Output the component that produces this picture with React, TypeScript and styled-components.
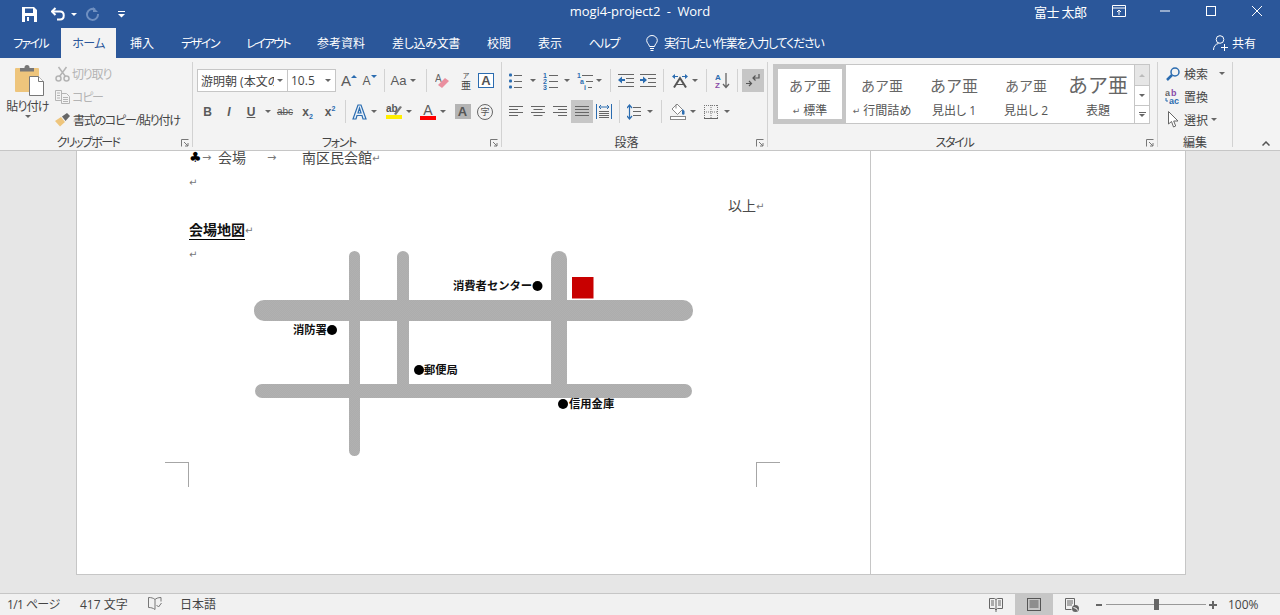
import React from "react";
import styled, { createGlobalStyle } from "styled-components";

const UI_FONT = `"Open Sans", "Noto Sans CJK JP", sans-serif`;
const DOC_FONT = `"Liberation Serif", "Noto Sans CJK JP", serif`;

const GlobalStyle = createGlobalStyle`
  html, body { margin: 0; padding: 0; height: 100%; overflow: hidden; }
  body { font-family: ${UI_FONT}; font-size: 12px; color: #444; font-feature-settings: "palt"; }
  svg { display: block; flex: none; }
`;

const Window = styled.div`
  width: 1280px;
  height: 615px;
  display: flex;
  flex-direction: column;
  overflow: hidden;
  background: #e6e6e6;
`;

const TitleBar = styled.div`
  height: 28px;
  background: #2b579a;
  color: #fff;
  display: flex;
  align-items: center;
  position: relative;
`;

const QuickAccess = styled.div`
  display: flex;
  align-items: center;
  padding-left: 22px;
`;

const QuickBtn = styled.div<{ $w: number }>`
  width: ${(p) => p.$w}px;
  display: flex;
  align-items: center;
  gap: 5px;
`;

const DocTitle = styled.div`
  position: absolute;
  left: 0;
  right: 0;
  top: 3px;
  text-align: center;
  font-size: 13px;
  letter-spacing: -0.1px;
  line-height: 16px;
  white-space: pre;
`;

const WindowControls = styled.div`
  margin-left: auto;
  display: flex;
  align-items: center;
  height: 22px;
  margin-top: -6px;
`;

const UserName = styled.span`
  font-size: 13px;
  letter-spacing: -0.6px;
  width: 78px;
`;

const WinBtn = styled.div<{ $w: number }>`
  width: ${(p) => p.$w}px;
  display: flex;
  justify-content: center;
`;

const TabBar = styled.div`
  height: 30px;
  background: #2b579a;
  display: flex;
  align-items: stretch;
  color: #fff;
`;

const Tab = styled.div<{ $w: number; $ls: number; $active?: boolean }>`
  width: ${(p) => p.$w}px;
  display: flex;
  align-items: center;
  justify-content: center;
  font-size: 12px;
  letter-spacing: ${(p) => p.$ls}px;
  background: ${(p) => (p.$active ? "#f3f3f3" : "transparent")};
  color: ${(p) => (p.$active ? "#2b579a" : "#fff")};
`;

const TellMe = styled.div`
  display: flex;
  align-items: center;
  gap: 6px;
  margin-left: 14px;
  font-size: 12px;
  letter-spacing: -1.2px;
`;

const ShareBtn = styled.div`
  margin-left: auto;
  margin-right: 24px;
  display: flex;
  align-items: center;
  gap: 4px;
  font-size: 12px;
`;

const Ribbon = styled.div`
  height: 93px;
  box-sizing: border-box;
  background: #f3f3f3;
  border-bottom: 1px solid #c6c6c6;
  padding-top: 4px;
  display: flex;
  align-items: flex-start;
  position: relative;
`;

const Group = styled.div<{ $w: number }>`
  width: ${(p) => p.$w}px;
  height: 85px;
  box-sizing: border-box;
  border-right: 1px solid #d2d2d2;
  display: flex;
  flex-direction: column;
  position: relative;
`;

const GroupBody = styled.div`
  flex: 1;
  min-height: 0;
`;

const GroupLabel = styled.div<{ $launcher?: boolean; $ls?: number }>`
  height: 12px;
  line-height: 16px;
  text-align: center;
  font-size: 12px;
  letter-spacing: ${(p) => p.$ls ?? 0}px;
  color: #444;
  padding-right: ${(p) => (p.$launcher ? 16 : 0)}px;
`;

const LauncherSlot = styled.div`
  position: absolute;
  right: 3px;
  bottom: 0;
`;

const ClipboardBody = styled(GroupBody)`
  display: flex;
`;

const PasteBtn = styled.div`
  width: 55px;
  display: flex;
  flex-direction: column;
  align-items: center;
  padding-top: 3px;
  font-size: 12px;
  color: #444;
`;

const PasteArt = styled.div`
  margin-left: 3px;
`;

const PasteLabel = styled.div`
  margin-top: 3px;
  letter-spacing: -0.8px;
  line-height: 16px;
`;

const ClipList = styled.div`
  display: flex;
  flex-direction: column;
`;

const ClipRow = styled.div<{ $off?: boolean }>`
  height: 23px;
  display: flex;
  align-items: center;
  gap: 2px;
  letter-spacing: -1.2px;
  color: ${(p) => (p.$off ? "#b4b4b4" : "#444")};
  white-space: nowrap;
`;

const ToolStack = styled.div`
  display: flex;
  flex-direction: column;
  gap: 8px;
  padding-top: 7px;
`;

const ToolRow = styled.div<{ $pl: number }>`
  height: 23px;
  display: flex;
  align-items: center;
  padding-left: ${(p) => p.$pl}px;
`;

const Tool = styled.div<{ $w: number; $active?: boolean; $ml?: number; $gap?: number }>`
  width: ${(p) => p.$w}px;
  height: 23px;
  margin-left: ${(p) => p.$ml ?? 0}px;
  flex: none;
  display: flex;
  align-items: center;
  justify-content: center;
  gap: ${(p) => p.$gap ?? 4}px;
  background: ${(p) => (p.$active ? "#c6c6c6" : "transparent")};
`;

const Divider = styled.div<{ $l?: number; $r?: number }>`
  width: 1px;
  height: 23px;
  flex: none;
  background: #d2d2d2;
  margin-left: ${(p) => p.$l ?? 0}px;
  margin-right: ${(p) => p.$r ?? 0}px;
`;

const Caret = styled.span<{ $c?: string }>`
  width: 0;
  height: 0;
  flex: none;
  border-left: 3px solid transparent;
  border-right: 3px solid transparent;
  border-top: 3px solid ${(p) => p.$c ?? "#666"};
`;

const SizeUpCaret = styled.span`
  width: 0;
  height: 0;
  align-self: flex-start;
  margin-top: 6px;
  border-left: 3px solid transparent;
  border-right: 3px solid transparent;
  border-bottom: 3px solid #2b6cb0;
`;

const SizeDownCaret = styled(SizeUpCaret)`
  border-bottom: none;
  border-top: 3px solid #2b6cb0;
`;

const ComboBox = styled.div<{ $w: number }>`
  width: ${(p) => p.$w}px;
  height: 23px;
  box-sizing: border-box;
  flex: none;
  background: #fff;
  border: 1px solid #c6c6c6;
  margin-right: -1px;
  display: flex;
  align-items: center;
  justify-content: space-between;
  padding: 0 4px 0 3px;
  font-size: 12px;
  color: #444;
  white-space: nowrap;
  overflow: hidden;
`;

const ComboText = styled.span<{ $w: number }>`
  width: ${(p) => p.$w}px;
  overflow: hidden;
`;

const Glyph = styled.span<{ $size?: number; $weight?: number; $italic?: boolean; $c?: string; $underline?: boolean }>`
  font-family: "Liberation Sans", sans-serif;
  font-size: ${(p) => p.$size ?? 12}px;
  font-weight: ${(p) => p.$weight ?? 700};
  font-style: ${(p) => (p.$italic ? "italic" : "normal")};
  color: ${(p) => p.$c ?? "#5a5a5a"};
  text-decoration: ${(p) => (p.$underline ? "underline" : "none")};
  line-height: 1;
  white-space: nowrap;
`;

const Sub = styled.sub`
  font-size: 7px;
  color: #2b6cb0;
  line-height: 0;
`;

const Sup = styled.sup`
  font-size: 7px;
  color: #2b6cb0;
  line-height: 0;
`;

const ColorA = styled.div<{ $bar: string }>`
  width: 16px;
  display: flex;
  flex-direction: column;
  align-items: center;
  font-family: "Liberation Sans", sans-serif;
  font-size: 14px;
  line-height: 12px;
  color: #5a5a5a;
  &::after {
    content: "";
    width: 100%;
    height: 4px;
    background: ${(p) => p.$bar};
  }
`;

const GrayA = styled.div`
  width: 16px;
  height: 15px;
  background: #b4b4b4;
  display: flex;
  align-items: center;
  justify-content: center;
  font-family: "Liberation Sans", sans-serif;
  font-weight: 700;
  font-size: 13px;
  color: #555;
`;

const BoxA = styled(GrayA)`
  box-sizing: border-box;
  background: #fff;
  border: 1px solid #2b6cb0;
`;

const CircleChar = styled.div`
  width: 16px;
  height: 16px;
  box-sizing: border-box;
  border: 1px solid #666;
  border-radius: 50%;
  display: flex;
  align-items: center;
  justify-content: center;
  font-size: 9px;
  color: #555;
`;

const Ruby = styled.div`
  display: flex;
  flex-direction: column;
  align-items: center;
  font-size: 10px;
  line-height: 10px;
  color: #444;
`;

const RubyTop = styled.span`
  font-size: 7px;
  line-height: 8px;
`;

const GalleryWrap = styled.div`
  display: flex;
  margin: 2px 0 0 5px;
`;

const Gallery = styled.div`
  width: 362px;
  height: 60px;
  box-sizing: border-box;
  background: #fff;
  border: 1px solid #c6c6c6;
  display: flex;
`;

const StyleCell = styled.div<{ $w: number; $selected?: boolean }>`
  width: ${(p) => p.$w}px;
  flex: none;
  box-sizing: border-box;
  border: ${(p) => (p.$selected ? "4px solid #c6c6c6" : "none")};
  padding-top: ${(p) => (p.$selected ? 0 : 4)}px;
  display: flex;
  flex-direction: column;
  align-items: center;
`;

const StyleSample = styled.div<{ $size: number }>`
  height: 31px;
  display: flex;
  align-items: center;
  font-family: ${DOC_FONT};
  font-feature-settings: normal;
  font-size: ${(p) => p.$size}px;
  color: #666;
`;

const StyleName = styled.div`
  margin-top: 4px;
  font-size: 12px;
  line-height: 14px;
  color: #555;
  white-space: nowrap;
  display: flex;
  align-items: center;
  gap: 3px;
`;

const SmallMark = styled.span`
  font-family: "DejaVu Sans", sans-serif;
  font-size: 9px;
  color: #666;
`;

const GalleryScroll = styled.div`
  width: 15px;
  display: flex;
  flex-direction: column;
  border: 1px solid #c6c6c6;
  border-left: none;
  height: 60px;
  box-sizing: border-box;
`;

const ScrollBtn = styled.div<{ $off?: boolean; $h: number }>`
  height: ${(p) => p.$h}px;
  display: flex;
  flex-direction: column;
  gap: 1px;
  align-items: center;
  justify-content: center;
  background: ${(p) => (p.$off ? "#e6e6e6" : "#fff")};
  border-bottom: 1px solid #c6c6c6;
  &:last-child { border-bottom: none; }
`;

const UpCaret = styled(Caret)`
  border-top: none;
  border-bottom: 3px solid #bbb;
`;

const CaretBar = styled.span`
  width: 7px;
  height: 1px;
  background: #666;
`;

const EditList = styled.div`
  display: flex;
  flex-direction: column;
  padding-left: 7px;
`;

const EditRow = styled.div`
  height: 23px;
  display: flex;
  align-items: center;
  gap: 3px;
  color: #444;
`;

const EditIcon = styled.div`
  width: 16px;
  display: flex;
  justify-content: center;
`;

const EditCaret = styled(Caret)<{ $ml: number }>`
  margin-left: ${(p) => p.$ml}px;
`;

const Collapse = styled.div`
  position: absolute;
  right: 10px;
  bottom: 4px;
`;

const DocArea = styled.div`
  flex: 1;
  min-height: 0;
  background: #e6e6e6;
  padding-left: 76px;
`;

const Page = styled.div`
  width: 1110px;
  height: 424px;
  box-sizing: border-box;
  background: #fff;
  border: 1px solid #c6c6c6;
  border-top: none;
  display: flex;
  overflow: hidden;
`;

const TextColumn = styled.div`
  width: 794px;
  box-sizing: border-box;
  border-right: 1px solid #c6c6c6;
  padding: 0 106px 0 112px;
  position: relative;
`;

const Line = styled.div<{ $first?: boolean; $right?: boolean }>`
  height: 24px;
  margin-top: ${(p) => (p.$first ? -6 : 0)}px;
  display: flex;
  align-items: center;
  justify-content: ${(p) => (p.$right ? "flex-end" : "flex-start")};
  font-family: ${DOC_FONT};
  font-feature-settings: normal;
  font-size: 14px;
  color: #4a4a4a;
  white-space: nowrap;
`;

const Club = styled.span`
  font-family: "DejaVu Sans", sans-serif;
  font-size: 14px;
  line-height: 16px;
  color: #000;
  width: 13px;
`;

const TabArrow = styled.span<{ $w: number; $pl?: number }>`
  width: ${(p) => p.$w}px;
  box-sizing: border-box;
  padding-left: ${(p) => p.$pl ?? 0}px;
  font-family: "DejaVu Sans", sans-serif;
  font-size: 11px;
  color: #777;
`;

const Mark = styled.span`
  font-family: "DejaVu Sans", sans-serif;
  font-size: 10px;
  color: #777;
  width: 8px;
  padding-top: 3px;
`;

const Heading = styled.span`
  margin-top: 4px;
  font-weight: 700;
  color: #111;
  border-bottom: 1.5px solid #000;
  line-height: 17px;
`;

const MapFigure = styled.div`
  position: absolute;
  left: 176px;
  top: 99px;
`;

const CropRow = styled.div`
  margin: 197px -16px 0 -24px;
  display: flex;
  justify-content: space-between;
`;

const CropMark = styled.div<{ $side: "left" | "right" }>`
  width: 23px;
  height: 24px;
  border-top: 1px solid #a6a6a6;
  border-${(p) => p.$side}: 1px solid #a6a6a6;
`;

const StatusBar = styled.div`
  height: 22px;
  box-sizing: border-box;
  background: #f1f1f1;
  border-top: 1px solid #c6c6c6;
  display: flex;
  align-items: stretch;
  font-size: 12px;
  color: #444;
`;

const StatusItem = styled.div<{ $w: number; $pl?: number; $ls?: number }>`
  width: ${(p) => p.$w}px;
  box-sizing: content-box;
  padding-left: ${(p) => p.$pl ?? 0}px;
  padding-bottom: 2px;
  letter-spacing: ${(p) => p.$ls ?? 0}px;
  display: flex;
  align-items: center;
`;

const ViewBtn = styled.div<{ $w: number; $active?: boolean }>`
  width: ${(p) => p.$w}px;
  display: flex;
  align-items: center;
  justify-content: center;
  background: ${(p) => (p.$active ? "#c6c6c6" : "transparent")};
`;

const StatusRight = styled.div`
  margin-left: auto;
  display: flex;
  align-items: stretch;
`;

const Zoom = styled.div`
  display: flex;
  align-items: center;
  margin-left: 5px;
  width: 184px;
`;

const ZoomTrack = styled.div`
  width: 100px;
  height: 1px;
  background: #999;
  margin: 0 3px 0 4px;
  position: relative;
`;

const ZoomThumb = styled.div`
  position: absolute;
  left: 48px;
  top: -5px;
  width: 5px;
  height: 11px;
  background: #666;
`;

const ZoomSign = styled.span<{ $w: number }>`
  width: ${(p) => p.$w}px;
  height: 2px;
  background: #666;
  position: relative;
  flex: none;
`;

const ZoomPlus = styled(ZoomSign)`
  &::after {
    content: "";
    position: absolute;
    left: 3px;
    top: -3px;
    width: 2px;
    height: 8px;
    background: #666;
  }
`;

const ZoomValue = styled.span`
  margin-left: 11px;
  font-size: 12px;
`;

const Lines = ({ rows, x1, x2, c = "#666" }: { rows: number[]; x1: number[]; x2: number[]; c?: string }) => (
  <>
    {rows.map((y, i) => (
      <line key={i} x1={x1[i]} x2={x2[i]} y1={y + 0.5} y2={y + 0.5} stroke={c} />
    ))}
  </>
);

const SaveIcon = () => (
  <svg width="15" height="15" viewBox="0 0 15 15">
    <path d="M0 0h12l3 3v12H0z" fill="#fff" />
    <rect x="3" y="1.5" width="8" height="4.5" fill="#2b579a" />
    <rect x="3" y="9" width="9" height="6" fill="#2b579a" />
    <rect x="5" y="10" width="2" height="4" fill="#fff" />
  </svg>
);

const UndoIcon = ({ c }: { c: string }) => (
  <svg width="15" height="14" viewBox="0 0 15 14">
    <path d="M4.5 1L1 4.5 4.5 8" fill="none" stroke={c} strokeWidth="2" />
    <path d="M2 4.5h7c5 0 5 8 0 8H6" fill="none" stroke={c} strokeWidth="2" />
  </svg>
);

const RedoIcon = () => (
  <svg width="14" height="14" viewBox="0 0 14 14">
    <path d="M9 2.5A5.5 5.5 0 1 0 12 7" fill="none" stroke="#6f8fc0" strokeWidth="2" />
    <path d="M7 0v5h5z" fill="#6f8fc0" />
  </svg>
);

const CustomizeIcon = () => (
  <svg width="7" height="7" viewBox="0 0 7 7">
    <rect y="0" width="7" height="1" fill="#fff" />
    <path d="M0 3h7L3.5 6.5z" fill="#fff" />
  </svg>
);

const DisplayIcon = () => (
  <svg width="14" height="12" viewBox="0 0 14 12" fill="none" stroke="#fff">
    <path d="M.5.5h13v11H.5zM.5 3h13M7 10V5M5 7l2-2 2 2" />
  </svg>
);

const MinIcon = () => (
  <svg width="10" height="2" viewBox="0 0 10 2"><rect width="10" height="1" y="0.5" fill="#fff" /></svg>
);
const MaxIcon = () => (
  <svg width="10" height="10" viewBox="0 0 10 10"><rect x=".5" y=".5" width="9" height="9" fill="none" stroke="#fff" /></svg>
);
const CloseIcon = () => (
  <svg width="10" height="10" viewBox="0 0 10 10"><path d="M0 0l10 10M10 0L0 10" stroke="#fff" /></svg>
);

const BulbIcon = () => (
  <svg width="12" height="17" viewBox="0 0 12 17" fill="none" stroke="#fff">
    <path d="M3.5 11.5C3 9 .7 8 .7 5.5a5.3 5 0 0 1 10.6 0c0 2.5-2.3 3.5-2.800 6z" />
    <path d="M4 13.500h4M4.500 15.500h3" />
  </svg>
);

const ShareIcon = () => (
  <svg width="15" height="16" viewBox="0 0 15 16" fill="none" stroke="#fff">
    <circle cx="7" cy="4.500" r="3.800" />
    <path d="M.5 15c0-3.500 2-6 5-6.500M8 12.500h7M11.500 9v7" />
  </svg>
);

const PasteIcon = () => (
  <svg width="29" height="31" viewBox="0 0 29 31">
    <rect x="0" y="3" width="24" height="24" rx="1" fill="#eec57c" />
    <circle cx="12" cy="2.500" r="2.500" fill="#777" />
    <rect x="5" y="3" width="14" height="3.500" fill="#777" />
    <path d="M14.500 11.500h9l5 5v14h-14z" fill="#fff" stroke="#777" />
    <path d="M23.500 11.500v5h5" fill="#fff" stroke="#777" />
  </svg>
);

const ScissorsIcon = () => (
  <svg width="15" height="16" viewBox="0 0 15 16" fill="none" stroke="#b4b4b4" strokeWidth="1.500">
    <circle cx="3.500" cy="12.500" r="2.500" />
    <circle cx="11.500" cy="12.500" r="2.500" />
    <path d="M4.500 10.500L11.500 1M10.500 10.500L3.500 1" />
  </svg>
);

const CopyIcon = () => (
  <svg width="15" height="14" viewBox="0 0 15 14" fill="none" stroke="#b4b4b4">
    <path d="M.5.5h6v10h-6zM6.500 3.500h5l3 3v7h-8z" fill="#f3f3f3" />
    <path d="M2 3h3M2 5.500h3M2 8h3M8 7.500h5M8 9.500h5M8 11.500h5" />
  </svg>
);

const BrushIcon = () => (
  <svg width="16" height="15" viewBox="0 0 16 15">
    <path d="M0 9l6-4 4 5-5 4.500z" fill="#eec57c" />
    <path d="M7 4.500l5-3.500 3 3-4.500 5z" fill="#666" />
  </svg>
);

const Launcher = () => (
  <svg width="8" height="8" viewBox="0 0 8 8" fill="none" stroke="#777">
    <path d="M.5 7.500v-7h7" />
    <path d="M3 3l4 4M7 4v3H4" />
  </svg>
);

const ListDigit = styled.text`
  font-family: "Liberation Sans", sans-serif;
  font-size: 7px;
  font-weight: 700;
  fill: #2b6cb0;
`;

const BulletListIcon = () => (
  <svg width="14" height="16" viewBox="0 0 14 16">
    {[2, 8, 14].map((y) => (
      <rect key={y} x="0" y={y - 1.5} width="3" height="3" rx="1" fill="#2b6cb0" />
    ))}
    <Lines rows={[2, 8, 14]} x1={[5, 5, 5]} x2={[13, 13, 13]} />
  </svg>
);

const NumberListIcon = () => (
  <svg width="15" height="18" viewBox="0 0 15 18">
    {["1", "2", "3"].map((n, i) => (
      <ListDigit key={n} x="0" y={5.5 + i * 6}>{n}</ListDigit>
    ))}
    <Lines rows={[3, 9, 15]} x1={[6, 6, 6]} x2={[15, 15, 15]} />
  </svg>
);

const MultiListIcon = () => (
  <svg width="16" height="18" viewBox="0 0 16 18">
    <ListDigit x="0" y="5.500">1</ListDigit>
    <ListDigit x="3" y="11.500">a</ListDigit>
    <ListDigit x="7" y="17.500">i</ListDigit>
    <Lines rows={[3, 9, 15]} x1={[5, 9, 11]} x2={[16, 16, 15]} />
  </svg>
);

const IndentIcon = ({ flip }: { flip?: boolean }) => (
  <svg width="16" height="13" viewBox="0 0 16 13">
    <Lines rows={[0, 4, 8, 12]} x1={[0, 8, 8, 0]} x2={[16, 16, 16, 16]} />
    {flip ? (
      <path d="M0 5h3V2.500l4 3.500-4 3.500V7H0z" fill="#2b6cb0" />
    ) : (
      <path d="M7 5H4V2.500L0 6l4 3.500V7h3z" fill="#2b6cb0" />
    )}
  </svg>
);

const DirectionIcon = () => (
  <svg width="16" height="14" viewBox="0 0 16 14">
    <path d="M2 13.500L8 4l6 9.500" fill="none" stroke="#555" strokeWidth="2" />
    <path d="M3 10.500h10" stroke="#555" />
    <path d="M0 2.500L3 0v5zM16 2.500L13 0v5z" fill="#2b6cb0" />
    <path d="M2 2.500h4M10 2.500h4" stroke="#2b6cb0" />
  </svg>
);

const SortIcon = () => (
  <svg width="15" height="16" viewBox="0 0 15 16">
    <text x="0" y="7" fontFamily="Liberation Sans" fontWeight="700" fontSize="8" fill="#2b6cb0">A</text>
    <text x="0" y="15" fontFamily="Liberation Sans" fontWeight="700" fontSize="8" fill="#8a4ca8">Z</text>
    <path d="M11 0v14M8 11l3 3.500 3-3.500" fill="none" stroke="#666" strokeWidth="1.300" />
  </svg>
);

const PilcrowIcon = () => (
  <svg width="14" height="13" viewBox="0 0 14 13" fill="none" stroke="#555" strokeWidth="1.200">
    <path d="M13 0v4H7M9.500 1.500L7 4l2.500 2.500" />
    <path d="M0 9.500h5M3 7l2.500 2.500L3 12" />
  </svg>
);

const AlignIcon = ({ kind }: { kind: "left" | "center" | "right" | "justify" }) => {
  const w = [14, 9, 14, 9];
  const full = kind === "justify";
  const starts = w.map((n) => (full ? 0 : kind === "left" ? 0 : kind === "center" ? (14 - n) / 2 : 14 - n));
  const ends = w.map((n, i) => (full ? 14 : starts[i] + n));
  return (
    <svg width="14" height="12" viewBox="0 0 14 12">
      <Lines rows={[0, 3, 6, 9]} x1={starts} x2={ends} />
    </svg>
  );
};

const DistributeIcon = () => (
  <svg width="16" height="15" viewBox="0 0 16 15">
    <path d="M.5 0v15M15.500 0v15" stroke="#2b6cb0" />
    <path d="M3 3h10M5 1L3 3l2 2M11 1l2 2-2 2" fill="none" stroke="#2b6cb0" />
    <Lines rows={[7, 9, 11, 13]} x1={[3, 3, 3, 3]} x2={[13, 13, 13, 13]} />
  </svg>
);

const SpacingIcon = () => (
  <svg width="14" height="16" viewBox="0 0 14 16">
    <path d="M2.500 2v12M0 4l2.500-3L5 4M0 12l2.500 3L5 12" fill="none" stroke="#2b6cb0" strokeWidth="1.200" />
    <Lines rows={[3, 7, 11]} x1={[6, 6, 6]} x2={[14, 14, 14]} />
  </svg>
);

const ShadingIcon = () => (
  <svg width="16" height="17" viewBox="0 0 16 17">
    <path d="M7 1l5.500 5.500-5 5-5.500-5.500z" fill="#fff" stroke="#888" />
    <path d="M6 1.500v4" stroke="#888" />
    <path d="M12.500 6l2 2v2.500a1.200 1.200 0 0 1-2.500 0V8z" fill="#2b6cb0" />
    <rect x=".5" y="13.500" width="15" height="3" fill="#fff" stroke="#888" />
  </svg>
);

const BordersIcon = () => (
  <svg width="14" height="14" viewBox="0 0 14 14" fill="none">
    <g stroke="#777" strokeDasharray="1 1">
      <path d="M.5 0v13M13.500 0v13M7 0v13M0 .5h14M0 7h14" />
    </g>
    <path d="M0 13.500h14" stroke="#666" />
  </svg>
);

const TextEffectIcon = () => (
  <svg width="15" height="16" viewBox="0 0 15 16">
    <path d="M1 15L6 1h3l5 14h-3l-1-3.500H5L4 15zM6 9h3L7.500 4z" fill="#e8f0f8" stroke="#2b6cb0" strokeWidth="1.200" />
  </svg>
);

const HighlightIcon = () => (
  <svg width="16" height="17" viewBox="0 0 16 17">
    <text x="0" y="9" fontFamily="Liberation Sans" fontSize="10" fontWeight="700" fill="#555">ab</text>
    <path d="M8 11l6-8 2 1-6 8z" fill="#777" />
    <rect x="0" y="12" width="16" height="4" fill="#ffee00" />
  </svg>
);

const EraserIcon = () => (
  <svg width="15" height="16" viewBox="0 0 15 16">
    <text x="0" y="9" fontFamily="Liberation Sans" fontSize="10" fill="#666">A</text>
    <path d="M3 12l7-7 4 3-7 7z" fill="#ea8f9f" />
  </svg>
);

const SearchIcon = () => (
  <svg width="14" height="14" viewBox="0 0 14 14" fill="none">
    <circle cx="9" cy="5" r="4" stroke="#2b6cb0" strokeWidth="1.500" />
    <path d="M6 8l-5 5" stroke="#2b6cb0" strokeWidth="2.500" />
  </svg>
);

const ReplaceIcon = () => (
  <svg width="16" height="16" viewBox="0 0 16 16">
    <text x="0" y="7" fontFamily="Liberation Sans" fontWeight="700" fontSize="9" fill="#666">a</text>
    <text x="6" y="7" fontFamily="Liberation Sans" fontWeight="700" fontSize="9" fill="#8a4ca8">b</text>
    <text x="4" y="15" fontFamily="Liberation Sans" fontWeight="700" fontSize="9" fill="#2b6cb0">ac</text>
    <path d="M1 9v3h2" fill="none" stroke="#2b6cb0" />
  </svg>
);

const SelectIcon = () => (
  <svg width="11" height="17" viewBox="0 0 11 17">
    <path d="M.5.500v12.500l3-2.500 2 5.500 2.200-1-2-5h4.300z" fill="#fff" stroke="#666" />
  </svg>
);

const ChevronUp = () => (
  <svg width="8" height="5" viewBox="0 0 8 5"><path d="M.5 4.500L4 1l3.500 3.500" fill="none" stroke="#555" strokeWidth="1.500" /></svg>
);

const BookIcon = () => (
  <svg width="14" height="13" viewBox="0 0 14 13" fill="none" stroke="#777">
    <path d="M7 2.500C5.500 1 3 .5.500.5v10c2.500 0 4.500.5 6.500 2V2.500c1-1 3-2 6-2v4" />
    <path d="M8.500 8l2 2 3-4" />
  </svg>
);

const ReadIcon = () => (
  <svg width="14" height="15" viewBox="0 0 14 15" fill="none" stroke="#666">
    <path d="M.5 1.500h5L7 2.500l1.500-1h5v10h-5L7 13l-1.500-1.500h-5zM7 2.500V15" />
    <path d="M2 4h3M2 6h3M2 8h3M9 4h3M9 6h3M9 8h3" />
  </svg>
);

const PrintIcon = () => (
  <svg width="14" height="13" viewBox="0 0 14 13" fill="none" stroke="#555">
    <rect x=".5" y=".5" width="13" height="12" />
    <path d="M2.500 3h9M2.500 5h9M2.500 7h9M2.500 9h9" />
  </svg>
);

const WebIcon = () => (
  <svg width="14" height="14" viewBox="0 0 14 14">
    <path d="M9.500 8.500V.5h-9v11h6" fill="none" stroke="#666" />
    <path d="M2 3h6M2 5h6M2 7h5" stroke="#666" />
    <circle cx="10.500" cy="10.500" r="3.500" fill="#666" />
    <path d="M8.500 9.500l3 1 1 2" stroke="#fff" fill="none" />
  </svg>
);

const MapLabel = styled.text`
  font-family: "Noto Sans CJK JP", sans-serif;
  font-feature-settings: normal;
  font-size: 11.3px;
  font-weight: 700;
  fill: #111;
`;

const VenueMap = () => (
  <svg width="442" height="208" viewBox="0 0 442 208">
    <defs>
      <pattern id="roadDither" width="2" height="2" patternUnits="userSpaceOnUse">
        <rect width="2" height="2" fill="#b1b1b1" />
        <rect width="1" height="1" fill="#adadad" />
        <rect x="1" y="1" width="1" height="1" fill="#adadad" />
      </pattern>
    </defs>
    <g fill="url(#roadDither)">
      <rect x="1" y="50" width="439" height="21" rx="10" />
      <rect x="2" y="134" width="437" height="14" rx="7" />
      <rect x="96" y="1" width="11" height="205" rx="5.500" />
      <rect x="144" y="1" width="12" height="140" rx="6" />
      <rect x="298" y="1" width="16" height="140" rx="8" />
    </g>
    <rect x="319" y="27" width="21.500" height="21.500" fill="#c80000" />
    <MapLabel x="200" y="40">消費者センター</MapLabel>
    <circle cx="284.500" cy="36" r="5" fill="#000" />
    <MapLabel x="40" y="84">消防署</MapLabel>
    <circle cx="79" cy="80" r="5" fill="#000" />
    <circle cx="166" cy="120" r="5" fill="#000" />
    <MapLabel x="171" y="124">郵便局</MapLabel>
    <circle cx="310" cy="154" r="5" fill="#000" />
    <MapLabel x="316" y="158">信用金庫</MapLabel>
  </svg>
);

const TABS = [
  { label: "ファイル", w: 61, ls: -1.7 },
  { label: "ホーム", w: 55, ls: -0.6, active: true },
  { label: "挿入", w: 52, ls: 0 },
  { label: "デザイン", w: 64, ls: -1.5 },
  { label: "レイアウト", w: 72, ls: -1.8 },
  { label: "参考資料", w: 74, ls: 0 },
  { label: "差し込み文書", w: 96, ls: -0.3 },
  { label: "校閲", w: 50, ls: 0 },
  { label: "表示", w: 52, ls: 0 },
  { label: "ヘルプ", w: 56, ls: -1.3 },
];

const STYLES = [
  { label: "標準", size: 14, w: 72, selected: true, mark: true },
  { label: "行間詰め", size: 14, w: 72, mark: true },
  { label: "見出し 1", size: 16, w: 72 },
  { label: "見出し 2", size: 14, w: 72 },
  { label: "表題", size: 20, w: 72 },
];

const App = () => {
  return (
    <Window>
      <GlobalStyle />
      <TitleBar>
        <QuickAccess>
          <QuickBtn $w={29}><SaveIcon /></QuickBtn>
          <QuickBtn $w={35}>
            <UndoIcon c="#fff" />
            <Caret $c="#fff" />
          </QuickBtn>
          <QuickBtn $w={32}><RedoIcon /></QuickBtn>
          <QuickBtn $w={10}><CustomizeIcon /></QuickBtn>
        </QuickAccess>
        <DocTitle>{"mogi4-project2  -  Word"}</DocTitle>
        <WindowControls>
          <UserName>富士 太郎</UserName>
          <WinBtn $w={14}><DisplayIcon /></WinBtn>
          <WinBtn $w={34} />
          <WinBtn $w={10}><MinIcon /></WinBtn>
          <WinBtn $w={36} />
          <WinBtn $w={10}><MaxIcon /></WinBtn>
          <WinBtn $w={36} />
          <WinBtn $w={10}><CloseIcon /></WinBtn>
          <WinBtn $w={18} />
        </WindowControls>
      </TitleBar>

      <TabBar>
        {TABS.map((t) => (
          <Tab key={t.label} $w={t.w} $ls={t.ls} $active={t.active}>{t.label}</Tab>
        ))}
        <TellMe>
          <BulbIcon />
          実行したい作業を入力してください
        </TellMe>
        <ShareBtn>
          <ShareIcon />
          共有
        </ShareBtn>
      </TabBar>

      <Ribbon>
        <Group $w={193}>
          <ClipboardBody>
            <PasteBtn>
              <PasteArt><PasteIcon /></PasteArt>
              <PasteLabel>貼り付け</PasteLabel>
              <Caret />
            </PasteBtn>
            <ClipList>
              <ClipRow $off><ScissorsIcon />切り取り</ClipRow>
              <ClipRow $off><CopyIcon />コピー</ClipRow>
              <ClipRow><BrushIcon />書式のコピー/貼り付け</ClipRow>
            </ClipList>
          </ClipboardBody>
          <GroupLabel $launcher $ls={-1.6}>クリップボード</GroupLabel>
          <LauncherSlot><Launcher /></LauncherSlot>
        </Group>

        <Group $w={309}>
          <GroupBody>
            <ToolStack>
              <ToolRow $pl={4}>
                <ComboBox $w={91}><ComboText $w={73}>游明朝 (本文の</ComboText><Caret /></ComboBox>
                <ComboBox $w={49}><span>10.5</span><Caret /></ComboBox>
                <Tool $w={20} $ml={4} $gap={0}><Glyph $size={15} $weight={400}>A</Glyph><SizeUpCaret /></Tool>
                <Tool $w={21} $gap={0}><Glyph $size={12} $weight={400}>A</Glyph><SizeDownCaret /></Tool>
                <Divider $l={4} />
                <Tool $w={37}><Glyph $size={13} $weight={400}>Aa</Glyph><Caret /></Tool>
                <Divider $l={4} />
                <Tool $w={30}><EraserIcon /></Tool>
                <Tool $w={18}><Ruby><RubyTop>ア</RubyTop>亜</Ruby></Tool>
                <Tool $w={22}><BoxA>A</BoxA></Tool>
              </ToolRow>
              <ToolRow $pl={4}>
                <Tool $w={21}><Glyph>B</Glyph></Tool>
                <Tool $w={22}><Glyph $italic $size={12} $weight={700}>I</Glyph></Tool>
                <Tool $w={22}><Glyph $underline>U</Glyph></Tool>
                <Tool $w={12}><Caret /></Tool>
                <Tool $w={22}><Glyph $size={10} $weight={400}><s>abc</s></Glyph></Tool>
                <Tool $w={23}><Glyph>x<Sub>2</Sub></Glyph></Tool>
                <Tool $w={22}><Glyph>x<Sup>2</Sup></Glyph></Tool>
                <Divider $l={4} />
                <Tool $w={36}><TextEffectIcon /><Caret /></Tool>
                <Tool $w={34}><HighlightIcon /><Caret /></Tool>
                <Tool $w={34}><ColorA $bar="#ff0000">A</ColorA><Caret /></Tool>
                <Tool $w={23} $ml={1}><GrayA>A</GrayA></Tool>
                <Tool $w={22}><CircleChar>字</CircleChar></Tool>
              </ToolRow>
            </ToolStack>
          </GroupBody>
          <GroupLabel $launcher $ls={-1.3}>フォント</GroupLabel>
          <LauncherSlot><Launcher /></LauncherSlot>
        </Group>

        <Group $w={266}>
          <GroupBody>
            <ToolStack>
              <ToolRow $pl={4}>
                <Tool $w={33} $gap={7}><BulletListIcon /><Caret /></Tool>
                <Tool $w={35} $gap={6}><NumberListIcon /><Caret /></Tool>
                <Tool $w={30} $gap={3}><MultiListIcon /><Caret /></Tool>
                <Divider $l={6} $r={4} />
                <Tool $w={22}><IndentIcon /></Tool>
                <Tool $w={22}><IndentIcon flip /></Tool>
                <Divider $l={4} $r={4} />
                <Tool $w={33}><DirectionIcon /><Caret /></Tool>
                <Divider $l={5} $r={2} />
                <Tool $w={26}><SortIcon /></Tool>
                <Divider $l={2} />
                <Tool $w={22} $ml={4} $active><PilcrowIcon /></Tool>
              </ToolRow>
              <ToolRow $pl={3}>
                <Tool $w={22}><AlignIcon kind="left" /></Tool>
                <Tool $w={22}><AlignIcon kind="center" /></Tool>
                <Tool $w={22}><AlignIcon kind="right" /></Tool>
                <Tool $w={22} $active><AlignIcon kind="justify" /></Tool>
                <Tool $w={22}><DistributeIcon /></Tool>
                <Divider $l={4} $r={4} />
                <Tool $w={32} $gap={6}><SpacingIcon /><Caret /></Tool>
                <Divider $l={5} $r={4} />
                <Tool $w={33}><ShadingIcon /><Caret /></Tool>
                <Tool $w={36} $gap={6}><BordersIcon /><Caret /></Tool>
              </ToolRow>
            </ToolStack>
          </GroupBody>
          <GroupLabel $launcher>段落</GroupLabel>
          <LauncherSlot><Launcher /></LauncherSlot>
        </Group>

        <Group $w={390}>
          <GroupBody>
            <GalleryWrap>
              <Gallery>
                {STYLES.map((s) => (
                  <StyleCell key={s.label} $w={s.w} $selected={s.selected}>
                    <StyleSample $size={s.size}>あア亜</StyleSample>
                    <StyleName>
                      {s.mark && <SmallMark>↵</SmallMark>}
                      {s.label}
                    </StyleName>
                  </StyleCell>
                ))}
              </Gallery>
              <GalleryScroll>
                <ScrollBtn $h={21} $off><UpCaret /></ScrollBtn>
                <ScrollBtn $h={19}><Caret /></ScrollBtn>
                <ScrollBtn $h={18}><CaretBar /><Caret /></ScrollBtn>
              </GalleryScroll>
            </GalleryWrap>
          </GroupBody>
          <GroupLabel $launcher $ls={-1.3}>スタイル</GroupLabel>
          <LauncherSlot><Launcher /></LauncherSlot>
        </Group>

        <Group $w={75}>
          <GroupBody>
            <EditList>
              <EditRow><EditIcon><SearchIcon /></EditIcon>検索<EditCaret $ml={8} /></EditRow>
              <EditRow><EditIcon><ReplaceIcon /></EditIcon>置換</EditRow>
              <EditRow><EditIcon><SelectIcon /></EditIcon>選択<EditCaret $ml={0} /></EditRow>
            </EditList>
          </GroupBody>
          <GroupLabel>編集</GroupLabel>
        </Group>
        <Collapse><ChevronUp /></Collapse>
      </Ribbon>

      <DocArea>
        <Page>
          <TextColumn>
            <Line $first>
              <Club>♣</Club>
              <TabArrow $w={16}>→</TabArrow>
              会場
              <TabArrow $w={56} $pl={21}>→</TabArrow>
              南区民会館
              <Mark>↵</Mark>
            </Line>
            <Line><Mark>↵</Mark></Line>
            <Line $right>以上<Mark>↵</Mark></Line>
            <Line><Heading>会場地図</Heading><Mark>↵</Mark></Line>
            <Line><Mark>↵</Mark></Line>
            <MapFigure><VenueMap /></MapFigure>
            <CropRow>
              <CropMark $side="right" />
              <CropMark $side="left" />
            </CropRow>
          </TextColumn>
        </Page>
      </DocArea>

      <StatusBar>
        <StatusItem $w={73} $pl={7} $ls={-0.6}>1/1 ページ</StatusItem>
        <StatusItem $w={68}>417 文字</StatusItem>
        <StatusItem $w={32}><BookIcon /></StatusItem>
        <StatusItem $w={50}>日本語</StatusItem>
        <StatusRight>
          <ViewBtn $w={39}><ReadIcon /></ViewBtn>
          <ViewBtn $w={38} $active><PrintIcon /></ViewBtn>
          <ViewBtn $w={38}><WebIcon /></ViewBtn>
          <Zoom>
            <ZoomSign $w={6} />
            <ZoomTrack><ZoomThumb /></ZoomTrack>
            <ZoomPlus $w={8} />
            <ZoomValue>100%</ZoomValue>
          </Zoom>
        </StatusRight>
      </StatusBar>
    </Window>
  );
};

export default App;
